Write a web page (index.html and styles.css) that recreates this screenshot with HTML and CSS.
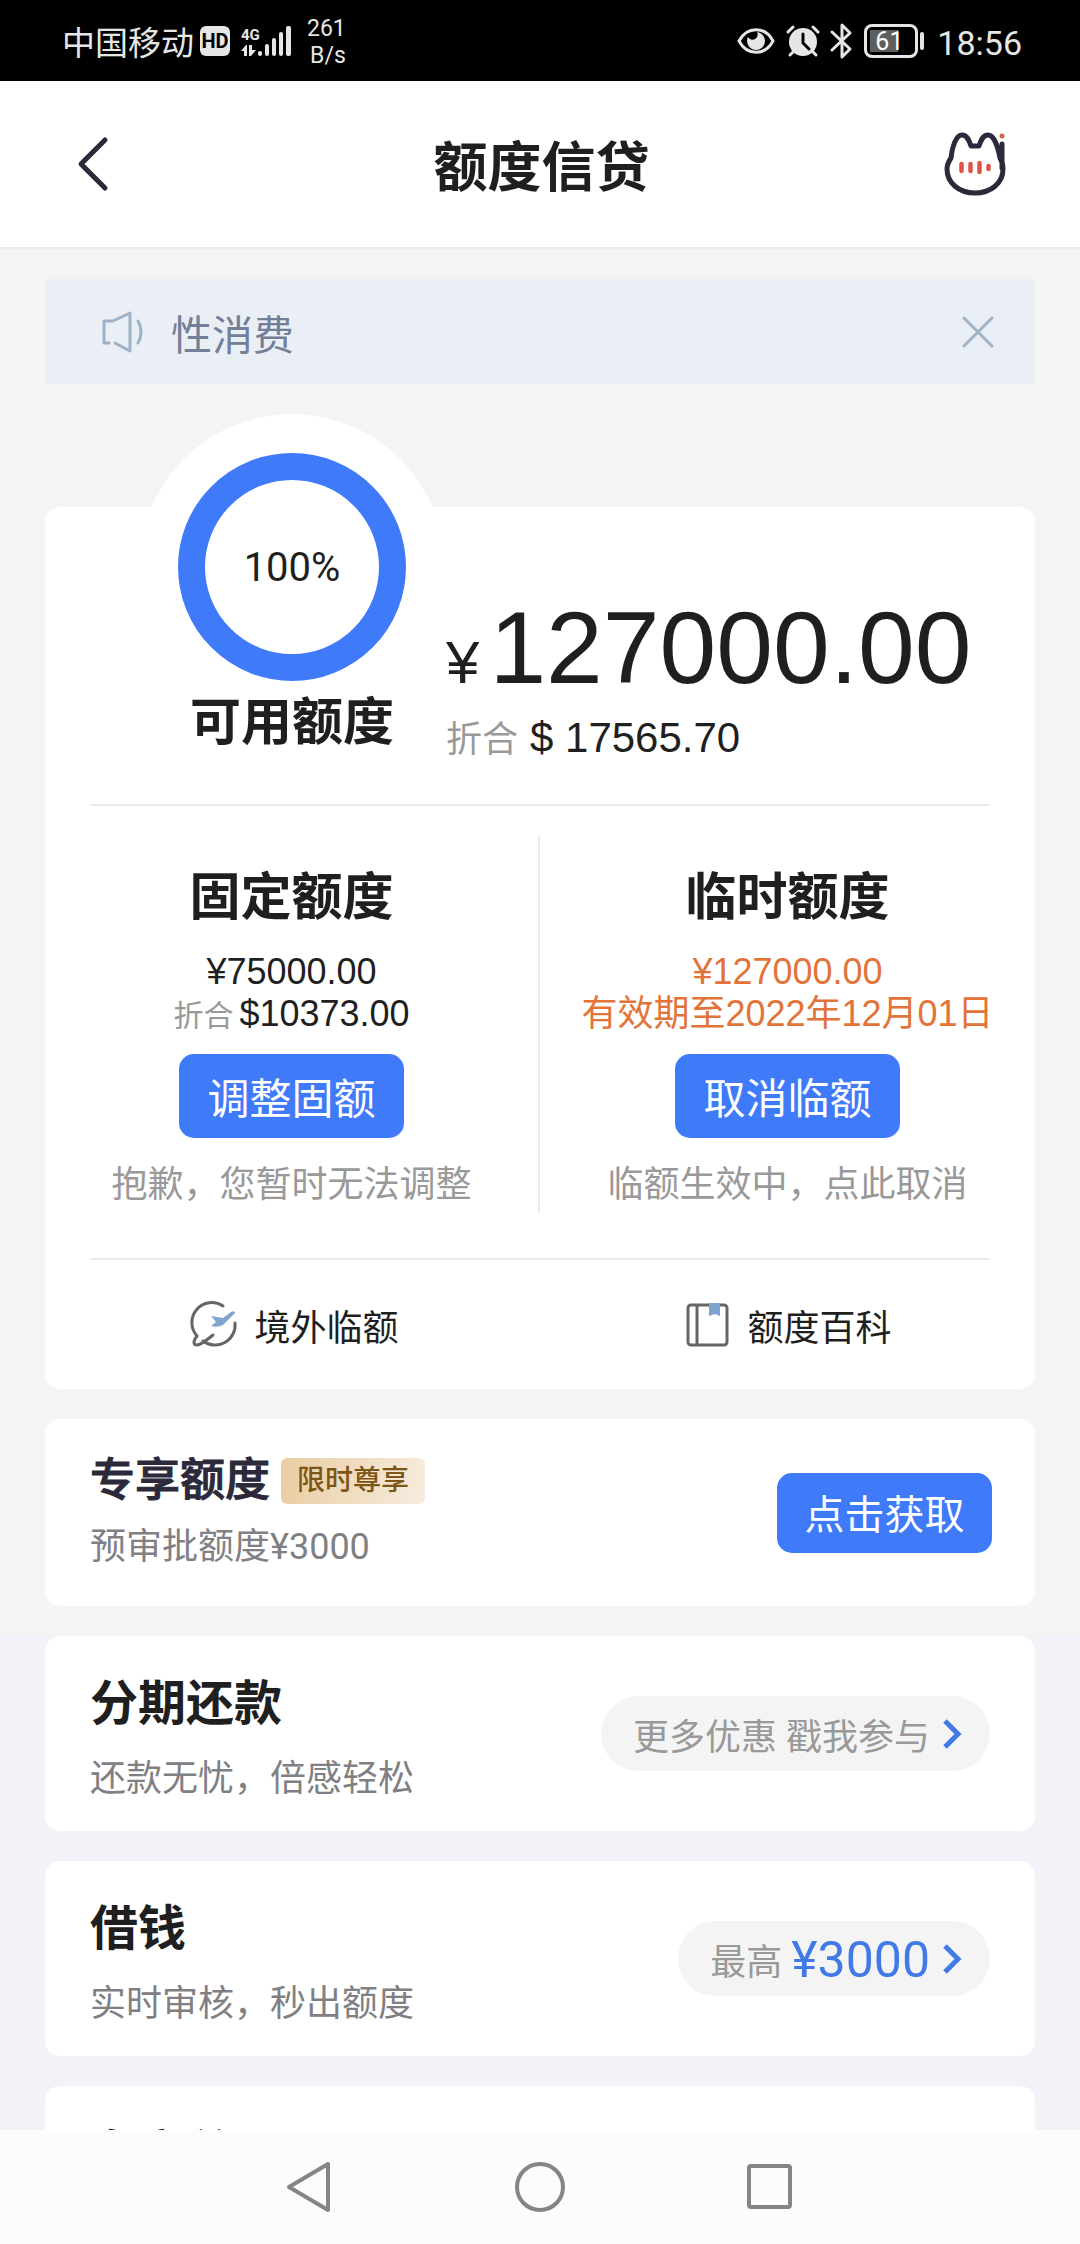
FILE: index.html
```html
<!DOCTYPE html>
<html lang="zh-CN">
<head>
<meta charset="utf-8">
<meta name="viewport" content="width=device-width, initial-scale=1">
<title>额度信贷</title>
<link rel="stylesheet" href="styles.css">
</head>
<body>
<div class="status">
  <div class="status-group">
    <span class="carrier">中国移动</span>
    <span class="hd">HD</span>
    <svg class="signal" width="50" height="32" viewBox="0 0 50 32" aria-hidden="true">
      <text x="0" y="15" class="signal-gen" fill="#e6e6e6">4G</text>
      <g fill="#e6e6e6">
        <path d="M3 31v-5H0l5-6h1v11zM8 20h3v5h4l-5 6H8z"/>
        <rect x="17" y="26" width="4" height="5" rx="2"/>
        <rect x="24" y="19" width="4" height="12" rx="2"/>
        <rect x="31" y="13" width="4" height="18" rx="2"/>
        <rect x="38" y="7" width="4" height="24" rx="2"/>
        <rect x="45" y="1" width="5" height="30" rx="2"/>
      </g>
    </svg>
    <span class="rate">261<br>B/s</span>
  </div>
  <div class="status-group">
    <svg width="38" height="28" viewBox="0 0 38 28" aria-hidden="true">
      <path d="M2 14C10-1 28-1 36 14C28 29 10 29 2 14z" fill="none" stroke="#e6e6e6" stroke-width="3"/>
      <path d="M20 5a9 9 0 1 1-10 9c0-2 .4-3 1-4a5 5 0 1 0 9-5z" fill="#e6e6e6"/>
    </svg>
    <svg class="alarm" width="34" height="32" viewBox="0 0 34 32" aria-hidden="true">
      <circle cx="17" cy="17" r="14" fill="#e6e6e6"/>
      <path d="M2 7l5-5M32 7l-5-5M4 30l4-4M30 30l-4-4" stroke="#e6e6e6" stroke-width="3" stroke-linecap="round"/>
      <path d="M17 9v9l6 6" fill="none" stroke="#000" stroke-width="3" stroke-linecap="round"/>
    </svg>
    <svg class="bt" width="22" height="36" viewBox="0 0 22 36" aria-hidden="true">
      <path d="M2 9l18 17-8 8V2l8 8L2 27" fill="none" stroke="#e6e6e6" stroke-width="3" stroke-linecap="round" stroke-linejoin="round"/>
    </svg>
    <span class="battery"><span class="battery-level">61</span></span>
    <span class="battery-tip"></span>
    <time class="clock">18:56</time>
  </div>
</div>

<header class="header">
  <button class="icon-btn back" type="button" aria-label="返回">
    <svg width="32" height="56" viewBox="0 0 32 56"><path d="M28 4L4 28l24 24" fill="none" stroke="#2c2a3a" stroke-width="5" stroke-linecap="round" stroke-linejoin="round"/></svg>
  </button>
  <h1 class="title">额度信贷</h1>
  <button class="icon-btn service" type="button" aria-label="客服">
    <svg width="62" height="64" viewBox="0 0 62 64">
      <path d="M7 26C8 15 12 3 18 3c5 0 7 5 9 11h8c2-6 4-11 9-11 6 0 10 12 12 23c2 3 3 7 3 11c0 14-12 24-28 24S3 51 3 37c0-4 2-8 4-11zM58 12v24" fill="none" stroke="#2c2a3a" stroke-width="5" stroke-linecap="round" stroke-linejoin="round"/>
      <path d="M17.500 32v7M26.500 32v7M35.500 31v9M44.500 34v3" stroke="#dd5347" stroke-width="4.500" stroke-linecap="round"/>
      <circle cx="58" cy="4" r="2.500" fill="#d9604f"/>
    </svg>
  </button>
</header>

<main class="content">
  <section class="notice">
    <svg width="44" height="42" viewBox="0 0 44 42" aria-hidden="true"><path d="M7 32H2V10h9L28 2v38L13 32M36 10q6 11 0 22" fill="none" stroke="#9eb2c6" stroke-width="3" stroke-linecap="round" stroke-linejoin="round"/></svg>
    <p class="notice-text">性消费</p>
    <button class="icon-btn" type="button" aria-label="关闭">
      <svg width="32" height="32" viewBox="0 0 32 32"><path d="M2 2l28 28M30 2L2 30" stroke="#9eb2c6" stroke-width="3" stroke-linecap="round"/></svg>
    </button>
  </section>

  <section class="card quota">
    <div class="hero">
      <div class="hero-gauge">
        <div class="ring">100%</div>
        <h2 class="hero-label">可用额度</h2>
      </div>
      <div class="hero-figures">
        <p class="amount"><span class="amount-sign">¥</span>127000.00</p>
        <p class="convert"><span class="muted">折合</span><span class="convert-value">$ 17565.70</span></p>
      </div>
    </div>
    <hr class="rule">
    <div class="halves">
      <div class="half">
        <h2 class="half-title">固定额度</h2>
        <p class="figure">¥75000.00</p>
        <p class="figure"><span class="muted figure-note">折合</span>$10373.00</p>
        <button class="btn" type="button">调整固额</button>
        <p class="hint">抱歉，您暂时无法调整</p>
      </div>
      <div class="half">
        <h2 class="half-title">临时额度</h2>
        <p class="figure accent">¥127000.00</p>
        <p class="figure accent">有效期至2022年12月01日</p>
        <button class="btn" type="button">取消临额</button>
        <p class="hint">临额生效中，点此取消</p>
      </div>
    </div>
    <hr class="rule">
    <nav class="links">
      <a class="link" href="#overseas">
        <svg width="46" height="46" viewBox="0 0 46 46" aria-hidden="true">
          <path d="M31 4A20 20 0 0 0 5 34C1 39 1 43 5 43c4 0 10-5 16-10M11 39A20 20 0 0 0 43 21" fill="none" stroke="#666" stroke-width="3" stroke-linecap="round"/>
          <path d="M19 14l12 2 8-6q4-2 4 1L31 23q-5 3-12 1l5-4z" fill="#7fa5cf"/>
        </svg>
        境外临额
      </a>
      <a class="link" href="#wiki">
        <svg width="46" height="46" viewBox="0 0 46 46" aria-hidden="true">
          <rect x="3" y="3" width="39" height="40" rx="3" fill="none" stroke="#666" stroke-width="3"/>
          <path d="M12 3v40" stroke="#666" stroke-width="3"/>
          <path d="M24 1h11v13l-5-2-6 2z" fill="#7fa5cf"/>
        </svg>
        额度百科
      </a>
    </nav>
  </section>

  <section class="card offer">
    <div class="offer-text">
      <h2 class="offer-title">专享额度<span class="badge">限时尊享</span></h2>
      <p class="sub">预审批额度¥3000</p>
    </div>
    <button class="btn btn-small" type="button">点击获取</button>
  </section>

  <div class="services">
    <section class="card service-card">
      <div class="service-text">
        <h2 class="service-title">分期还款</h2>
        <p class="sub">还款无忧，倍感轻松</p>
      </div>
      <a class="pill" href="#instalment"><span>更多优惠 戳我参与</span>
        <svg width="18" height="30" viewBox="0 0 18 30" aria-hidden="true"><path d="M2 2l13 13L2 28" fill="none" stroke="#4179e6" stroke-width="5"/></svg>
      </a>
    </section>
    <section class="card service-card">
      <div class="service-text">
        <h2 class="service-title">借钱</h2>
        <p class="sub">实时审核，秒出额度</p>
      </div>
      <a class="pill" href="#loan"><span>最高</span><span class="pill-amount">¥3000</span>
        <svg width="18" height="30" viewBox="0 0 18 30" aria-hidden="true"><path d="M2 2l13 13L2 28" fill="none" stroke="#4179e6" stroke-width="5"/></svg>
      </a>
    </section>
    <section class="card service-card">
      <div class="service-text">
        <h2 class="service-title">专享兑现</h2>
      </div>
    </section>
  </div>
</main>

<nav class="sysnav" aria-label="系统导航">
  <button class="icon-btn" type="button" aria-label="后退"><svg width="52" height="52" viewBox="0 0 52 52"><path d="M44 3v46L5 26z" fill="none" stroke="#858585" stroke-width="4" stroke-linejoin="round"/></svg></button>
  <button class="icon-btn" type="button" aria-label="主屏幕"><svg width="52" height="52" viewBox="0 0 52 52"><circle cx="26" cy="26" r="23" fill="none" stroke="#858585" stroke-width="4"/></svg></button>
  <button class="icon-btn" type="button" aria-label="最近任务"><svg width="52" height="52" viewBox="0 0 52 52"><rect x="5" y="5" width="41" height="41" rx="2" fill="none" stroke="#858585" stroke-width="4"/></svg></button>
</nav>
</body>
</html>
```
FILE: styles.css
```css
* {
  box-sizing: border-box;
}

body {
  margin: 0;
  height: 100vh;
  display: flex;
  flex-direction: column;
  overflow: hidden;
  background: #f4f4f4;
  color: #1f1f1f;
  font-family: Roboto, "Noto Sans CJK SC", sans-serif;
  font-size: 36px;
}

h1, h2, p {
  margin: 0;
}

a {
  color: inherit;
  text-decoration: none;
}

svg {
  display: block;
  flex: none;
  overflow: visible;
}

button {
  font: inherit;
  border: 0;
  padding: 0;
}

.icon-btn {
  background: none;
}

.muted {
  color: #999;
}

/* Phone status bar */
.status {
  flex: none;
  height: 81px;
  display: flex;
  align-items: center;
  justify-content: space-between;
  padding: 0 58px 0 62px;
  background: #000;
  color: #e6e6e6;
}

.status-group {
  display: flex;
  align-items: center;
}

.carrier {
  font-size: 33px;
}

.hd {
  width: 30px;
  height: 30px;
  margin-left: 6px;
  border-radius: 6px;
  background: #e6e6e6;
  color: #000;
  font-size: 20px;
  font-weight: 700;
  line-height: 30px;
  text-align: center;
}

.signal {
  margin-left: 11px;
}

.signal-gen {
  font-family: Roboto, sans-serif;
  font-size: 15px;
  font-weight: 700;
}

.rate {
  margin-left: 16px;
  padding-top: 3px;
  font-size: 23px;
  line-height: 27px;
  text-align: right;
}

.alarm {
  margin-left: 11px;
}

.bt {
  margin-left: 10px;
}

.battery {
  width: 54px;
  height: 34px;
  margin-left: 12px;
  padding: 3px;
  border: 3px solid #e6e6e6;
  border-radius: 8px;
  font-size: 25px;
  line-height: 24px;
  color: #fff;
}

.battery-level {
  display: block;
  width: 28px;
  height: 22px;
  padding-left: 5px;
  background: #5e5e5e;
}

.battery-tip {
  width: 4px;
  height: 18px;
  margin-left: 2px;
  border-radius: 2px;
  background: #e6e6e6;
}

.clock {
  margin-left: 13px;
  padding-top: 4px;
  font-size: 34px;
}

/* App header */
.header {
  flex: none;
  display: grid;
  grid-template-columns: 1fr auto 1fr;
  align-items: center;
  height: 168px;
  padding: 0 74px 0 77px;
  background: #fff;
  border-bottom: 2px solid #ebebeb;
}

.title {
  padding-top: 10px;
  font-size: 54px;
  font-weight: 700;
  line-height: 80px;
}

.back {
  justify-self: start;
}

.service {
  justify-self: end;
}

.content {
  flex: 1;
  min-height: 0;
  overflow: hidden;
  padding-top: 30px;
}

/* Notice strip */
.notice {
  display: flex;
  align-items: center;
  height: 105px;
  margin: 0 45px;
  padding: 0 41px 0 57px;
  background: #e9eff4;
  color: #747e98;
}

.notice-text {
  flex: 1;
  margin-left: 25px;
  font-size: 41px;
}

/* Cards */
.card {
  margin: 0 45px 30px;
  border-radius: 15px;
  background: #fff;
}

.quota {
  margin-top: 123px;
}

.hero {
  display: flex;
  align-items: flex-end;
  gap: 40px;
  padding: 0 45px 39px 133px;
}

.hero-gauge {
  width: 228px;
  margin-top: -54px;
}

.ring {
  display: flex;
  align-items: center;
  justify-content: center;
  height: 228px;
  border: 27px solid #3f7af8;
  border-radius: 50%;
  background: #fff;
  box-shadow: 0 0 0 39px #fff;
  font-size: 40px;
}

.hero-label {
  font-size: 51px;
  font-weight: 700;
  line-height: 84px;
  text-align: center;
}

.amount {
  font-family: "Liberation Sans", sans-serif;
  font-size: 102px;
  line-height: 110px;
  white-space: nowrap;
}

.amount-sign {
  margin-right: 10px;
  font-size: 60px;
  line-height: 60px;
}

.convert {
  display: flex;
  align-items: baseline;
  gap: 12px;
  margin-top: 10px;
  line-height: 50px;
}

.convert-value {
  font-family: "Liberation Sans", sans-serif;
  font-size: 42px;
}

.rule {
  height: 2px;
  margin: 0 45px;
  border: 0;
  background: #ebebeb;
}

.halves {
  display: grid;
  grid-template-columns: 1fr 1fr;
  padding: 30px 0 45px;
}

.half {
  display: flex;
  flex-direction: column;
  align-items: center;
  padding-top: 32px;
  white-space: nowrap;
}

.half:first-child {
  border-right: 2px solid #ebebeb;
}

.half-title {
  margin-bottom: 23px;
  font-size: 51px;
  font-weight: 700;
  line-height: 60px;
}

.figure {
  font-family: "Liberation Sans", "Noto Sans CJK SC", sans-serif;
  line-height: 42px;
}

.figure-note {
  margin-right: 6px;
  font-size: 30px;
  line-height: 30px;
}

.accent {
  color: #e2743a;
}

.btn {
  width: 225px;
  height: 84px;
  margin: 19px 0;
  padding-bottom: 2px;
  border-radius: 15px;
  background: #3f7af8;
  color: #fff;
  font-size: 42px;
}

.hint {
  color: #999;
  line-height: 56px;
}

.links {
  display: grid;
  grid-template-columns: 1fr 1fr;
  height: 129px;
  padding-left: 4px;
}

.link {
  display: flex;
  align-items: center;
  justify-content: center;
  gap: 16px;
}

/* Pre-approved offer */
.offer {
  display: flex;
  align-items: center;
  justify-content: space-between;
  padding: 32px 43px 32px 45px;
}

.offer-title {
  display: flex;
  align-items: center;
  gap: 11px;
  color: #2c2a3a;
  font-size: 45px;
  font-weight: 500;
  line-height: 60px;
  -webkit-text-stroke: 1px currentColor;
}

.badge {
  padding: 0 16px;
  border-radius: 6px;
  background: linear-gradient(100deg, #e9cda2, #f7ecdf);
  color: #7d5514;
  font-size: 28px;
  line-height: 46px;
  -webkit-text-stroke: 0;
}

.sub {
  margin-top: 9px;
  color: #808084;
  line-height: 54px;
}

.btn-small {
  width: 215px;
  height: 80px;
  margin: 0;
  font-size: 40px;
}

/* Service list */
.services {
  background: #f2f3f8;
}

.service-card {
  display: flex;
  align-items: center;
  justify-content: space-between;
  padding: 0 45px;
}

.service-text {
  padding: 38px 0 25px;
}

.service-text .sub {
  margin-top: 18px;
}

.service-title {
  font-size: 48px;
  font-weight: 700;
  line-height: 60px;
}

.pill {
  display: flex;
  align-items: center;
  gap: 13px;
  height: 75px;
  padding: 0 29px 0 32px;
  border-radius: 38px;
  background: #f4f4f4;
  color: #999;
}

.pill-amount {
  margin-left: -4px;
  padding-top: 3px;
  color: #4179e6;
  font-size: 50px;
}

/* Phone navigation bar */
.sysnav {
  flex: none;
  display: grid;
  grid-template-columns: repeat(3, 230px);
  justify-content: center;
  justify-items: center;
  align-items: center;
  height: 114px;
  background: #fcfcfc;
}
```
